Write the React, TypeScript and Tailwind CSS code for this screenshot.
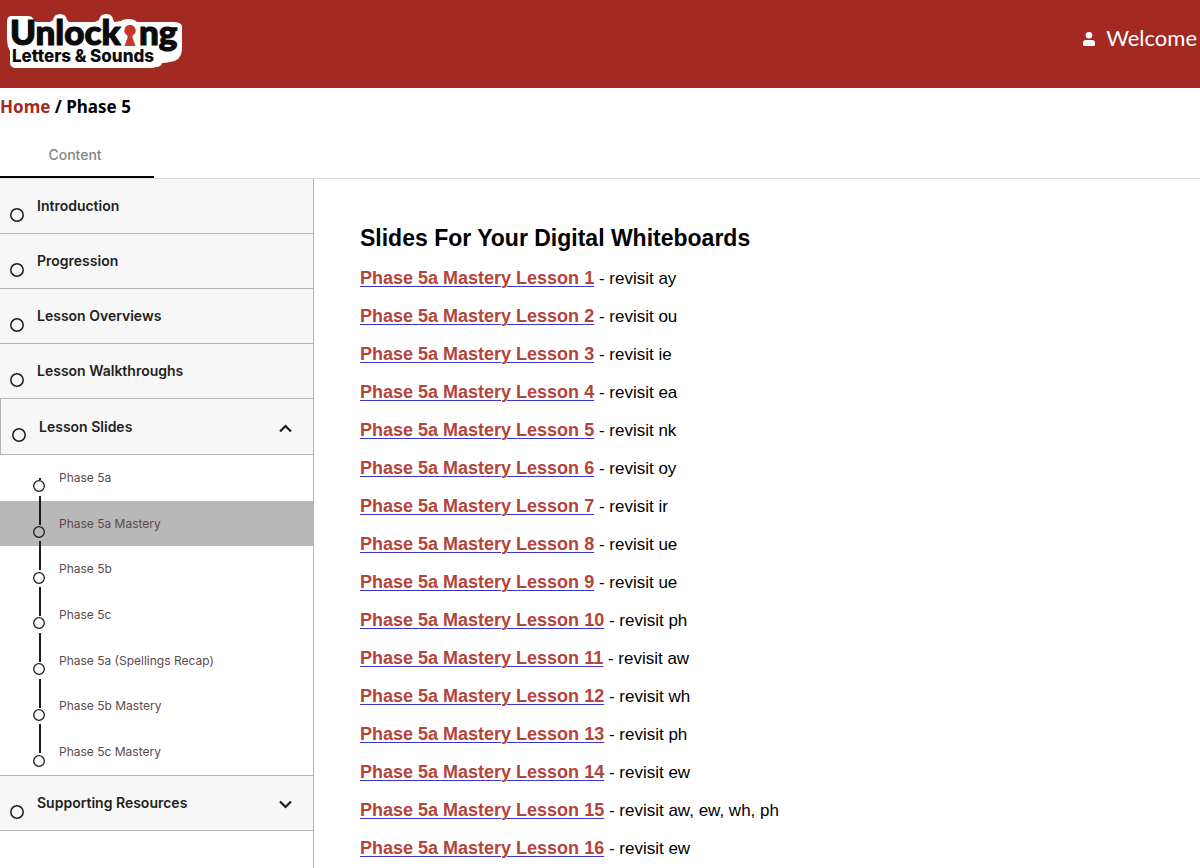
import { useState } from "react";
import clsx from "clsx";

const sections = [
  { title: "Introduction" },
  { title: "Progression" },
  { title: "Lesson Overviews" },
  { title: "Lesson Walkthroughs" },
  {
    title: "Lesson Slides",
    items: [
      "Phase 5a",
      "Phase 5a Mastery",
      "Phase 5b",
      "Phase 5c",
      "Phase 5a (Spellings Recap)",
      "Phase 5b Mastery",
      "Phase 5c Mastery",
    ],
  },
  { title: "Supporting Resources", items: [] },
];

const revisits = [
  "ay", "ou", "ie", "ea", "nk", "oy", "ir", "ue",
  "ue", "ph", "aw", "wh", "ph", "ew", "aw, ew, wh, ph", "ew",
];

function Logo() {
  return (
    <svg width="190" height="70" viewBox="0 0 190 70" role="img" aria-label="Unlocking Letters & Sounds">
      {/* white sticker edge */}
      <path
        d="M12 16h16q5 0 6 5l2 1h14l3-2q1-6 7-6t7 6l2 2h26l4-2q1-6 7-6 6 0 7 5l1 3 7-1q2-2 8-2 5 0 8 3h36q8 0 9 4v24q-1 11-12 12-4 1-8 1-1 4-6 4l-3 1H16q-6 0-6-6V51q-3-5-3-11V21q0-5 5-5Z"
        fill="#fff"
      />
      <g fontFamily="Lato, sans-serif" fontWeight="900" fontSize="35" fill="#0b0b0b" stroke="#0b0b0b" strokeWidth="1.2">
        <text x="10" y="45">Unlock</text>
        <text x="139" y="45">ng</text>
      </g>
      <text x="12" y="62" fontFamily="Inter, sans-serif" fontWeight="800" fontSize="17" fill="#0b0b0b">
        Letters &amp; Sounds
      </text>
      {/* keyhole standing in for the i */}
      <path d="M130 25a5.500 5.500 0 0 1 3 10.200q-1 1-.5 2.500l3 8.300h-11l3-8.300q.5-1.500-.5-2.500a5.500 5.500 0 0 1 3-10.200Z" fill="#c5362b" />
    </svg>
  );
}

function UserIcon() {
  return (
    <svg width="12" height="14" viewBox="0 0 12 14" fill="#fff" className="mt-0.5" aria-hidden="true">
      <circle cx="6" cy="3.300" r="3.300" />
      <path d="M0 12.500v-1.500Q0 8 3 8h6q3 0 3 3v1.500q0 1.500-1.500 1.500h-9Q0 14 0 12.500Z" />
    </svg>
  );
}

function Chevron({ open }: { open: boolean }) {
  return (
    <svg width="13" height="9" viewBox="0 0 13 9" fill="none" stroke="#1c1c1c" strokeWidth="2.200" className="mt-[3px]" aria-hidden="true">
      <path d={open ? "M1 7.500l5.500-5.500L12 7.500" : "M1 1.500l5.500 5.500L12 1.500"} />
    </svg>
  );
}

function Ring({ className }: { className: string }) {
  return (
    <svg viewBox="0 0 14 14" fill="none" stroke="#1c1c1c" strokeWidth="1.500" className={clsx("mt-[17px] shrink-0", className)} aria-hidden="true">
      <circle cx="7" cy="7" r="6.200" />
    </svg>
  );
}

function Sidebar() {
  const [open, setOpen] = useState("Lesson Slides");
  const [selected, setSelected] = useState("Phase 5a Mastery");

  return (
    <nav className="w-[314px] shrink-0 border-r border-[#b4b4b4]" aria-label="Course content">
      {sections.map(({ title, items }) => {
        const isOpen = open === title;
        return (
          <div key={title}>
            <button
              type="button"
              onClick={() => setOpen(isOpen ? "" : title)}
              className={clsx(
                "flex w-full items-center gap-[13px] border-b border-[#b4b4b4] bg-[#f7f7f7] pr-[21px] text-left",
                isOpen ? "h-14 border-l pl-[11px]" : "h-[55px] pl-2.5"
              )}
            >
              <Ring className="size-3.5" />
              <span className="flex-1 text-sm font-semibold text-[#222]">{title}</span>
              {items && <Chevron open={isOpen} />}
            </button>
            {isOpen && items && items.length > 0 && (
              <ul className="grid h-[321px] auto-rows-fr border-b border-[#b4b4b4]">
                {items.map((item, i) => (
                  <li key={item} className={clsx("relative", item === selected && "bg-[#b8b8b8]")}>
                    {i === 0 && <span className="absolute top-[23px] left-[39px] h-0.5 w-0.5 bg-[#1c1c1c]" />}
                    {i > 0 && <span className="absolute -top-[5px] left-[39px] h-[29px] w-0.5 bg-[#1c1c1c]" />}
                    <button
                      type="button"
                      onClick={() => setSelected(item)}
                      className="flex h-full w-full items-center gap-3.5 pl-[33px] text-left"
                    >
                      <Ring className="size-3" />
                      <span className="text-xs text-[#5c4a4a]">{item}</span>
                    </button>
                  </li>
                ))}
              </ul>
            )}
          </div>
        );
      })}
    </nav>
  );
}

export default function App() {
  return (
    <div className="flex h-screen flex-col overflow-hidden bg-white font-[Inter,sans-serif]">
      <header className="flex h-[88px] shrink-0 items-start justify-between bg-[#a32a22]">
        <a href="#home">
          <Logo />
        </a>
        <a href="#account" className="flex items-center gap-[11px] pt-6 pr-[3px] text-white">
          <UserIcon />
          <span className="font-[Lato,sans-serif] text-[22px] leading-7">Welcome</span>
        </a>
      </header>

      <div className="pt-px font-['Noto_Sans',sans-serif] text-[17px] leading-9 font-bold text-black">
        <a href="#home" className="text-[#a32a22]">Home</a> / Phase 5
      </div>

      <div className="flex shrink-0 border-b border-[#ddd]">
        <button type="button" className="h-[53px] w-[154px] border-b-2 border-black pt-2 pr-1 text-sm font-medium text-[#858585]">
          Content
        </button>
      </div>

      <div className="flex min-h-0 flex-1">
        <Sidebar />
        <main className="min-w-0 flex-1 overflow-hidden px-[46px] pt-[45px] font-['Liberation_Sans',Arial,sans-serif] text-black">
          <h1 className="text-[23px] leading-7 font-bold">Slides For Your Digital Whiteboards</h1>
          <ul className="pt-2 text-[17px]">
            {revisits.map((sound, i) => (
              <li key={i} className="leading-[38px]">
                <a
                  href={`#lesson-${i + 1}`}
                  className="text-lg leading-5 font-bold text-[#b5433a] underline decoration-[#3b35d0] decoration-1 underline-offset-2"
                >
                  Phase 5a Mastery Lesson {i + 1}
                </a>{" "}
                - revisit {sound}
              </li>
            ))}
          </ul>
        </main>
      </div>
    </div>
  );
}
